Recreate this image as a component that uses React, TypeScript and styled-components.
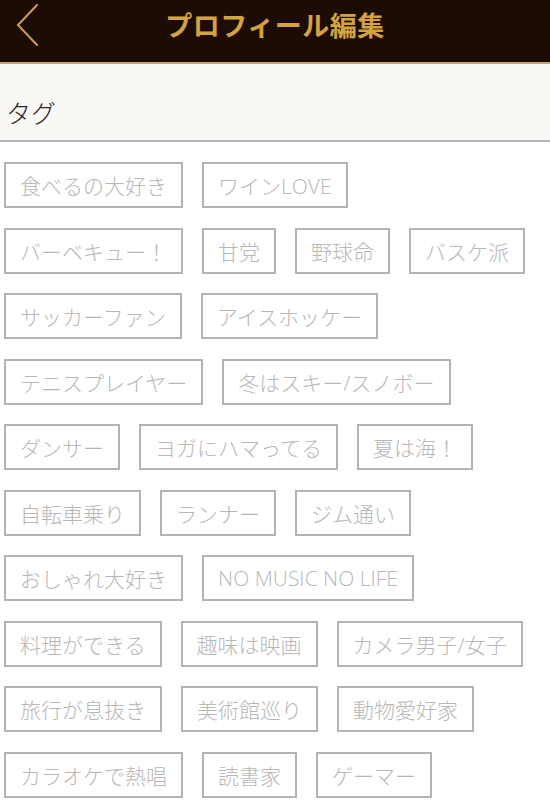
import React from "react";
import styled, { createGlobalStyle } from "styled-components";

const Global = createGlobalStyle`
  html, body { margin: 0; padding: 0; background: #ffffff; }
  body { font-family: "Open Sans", "Noto Sans CJK JP", sans-serif; }
  * { box-sizing: border-box; }
`;

const Page = styled.div`
  width: 550px;
  min-height: 800px;
  background: #ffffff;
  display: flex;
  flex-direction: column;
`;

const Header = styled.header`
  height: 64px;
  background: #1d0c06;
  border-bottom: 2px solid #c9a66a;
  display: grid;
  grid-template-columns: 1fr auto 1fr;
  align-items: start;
`;

const BackButton = styled.button`
  justify-self: start;
  background: none;
  border: none;
  padding: 0;
  margin: 4px 0 0 16px;
  width: 24px;
  height: 42px;
  display: flex;
  cursor: pointer;
`;

const Title = styled.h1`
  margin: 0;
  font-family: "Noto Sans CJK JP", sans-serif;
  font-size: 27px;
  font-weight: 700;
  line-height: 50px;
  color: #d3a342;
  letter-spacing: 0.5px;
`;

const SectionHead = styled.div`
  background: #faf8f4;
  height: 78px;
  padding: 33px 0 0 6px;
  border-bottom: 2px solid #b5b5b5;
`;

const SectionLabel = styled.h2`
  margin: 0;
  font-family: "Noto Sans CJK JP", sans-serif;
  font-size: 25px;
  font-weight: 300;
  line-height: 30px;
  color: #262626;
`;

const TagList = styled.div`
  display: flex;
  flex-direction: column;
  gap: 19.5px;
  padding: 20px 0 0 4px;
`;

const TagRow = styled.div`
  display: flex;
  gap: 19px;
`;

const Tag = styled.button`
  height: 46px;
  padding: 0 14px;
  border: 2px solid #b3b3b3;
  background: #ffffff;
  display: flex;
  align-items: center;
  justify-content: center;
  font-family: "Open Sans", "Noto Sans CJK JP", sans-serif;
  font-size: 21px;
  font-weight: 300;
  color: #b8b8b8;
  white-space: nowrap;
  cursor: pointer;
`;

const rows: string[][] = [
  ["食べるの大好き", "ワインLOVE"],
  ["バーベキュー！", "甘党", "野球命", "バスケ派"],
  ["サッカーファン", "アイスホッケー"],
  ["テニスプレイヤー", "冬はスキー/スノボー"],
  ["ダンサー", "ヨガにハマってる", "夏は海！"],
  ["自転車乗り", "ランナー", "ジム通い"],
  ["おしゃれ大好き", "NO MUSIC NO LIFE"],
  ["料理ができる", "趣味は映画", "カメラ男子/女子"],
  ["旅行が息抜き", "美術館巡り", "動物愛好家"],
  ["カラオケで熱唱", "読書家", "ゲーマー"],
];

export default function App() {
  return (
    <>
      <Global />
      <Page>
        <Header>
          <BackButton aria-label="戻る">
            <svg width="24" height="42" viewBox="0 0 24 42">
              <polyline
                points="21,1 2,21 21,41"
                fill="none"
                stroke="#c9a04c"
                strokeWidth="2"
                strokeLinecap="round"
                strokeLinejoin="miter"
              />
            </svg>
          </BackButton>
          <Title>プロフィール編集</Title>
          <div />
        </Header>
        <SectionHead>
          <SectionLabel>タグ</SectionLabel>
        </SectionHead>
        <TagList>
          {rows.map((row, i) => (
            <TagRow key={i}>
              {row.map((t) => (
                <Tag key={t}>{t}</Tag>
              ))}
            </TagRow>
          ))}
        </TagList>
      </Page>
    </>
  );
}
